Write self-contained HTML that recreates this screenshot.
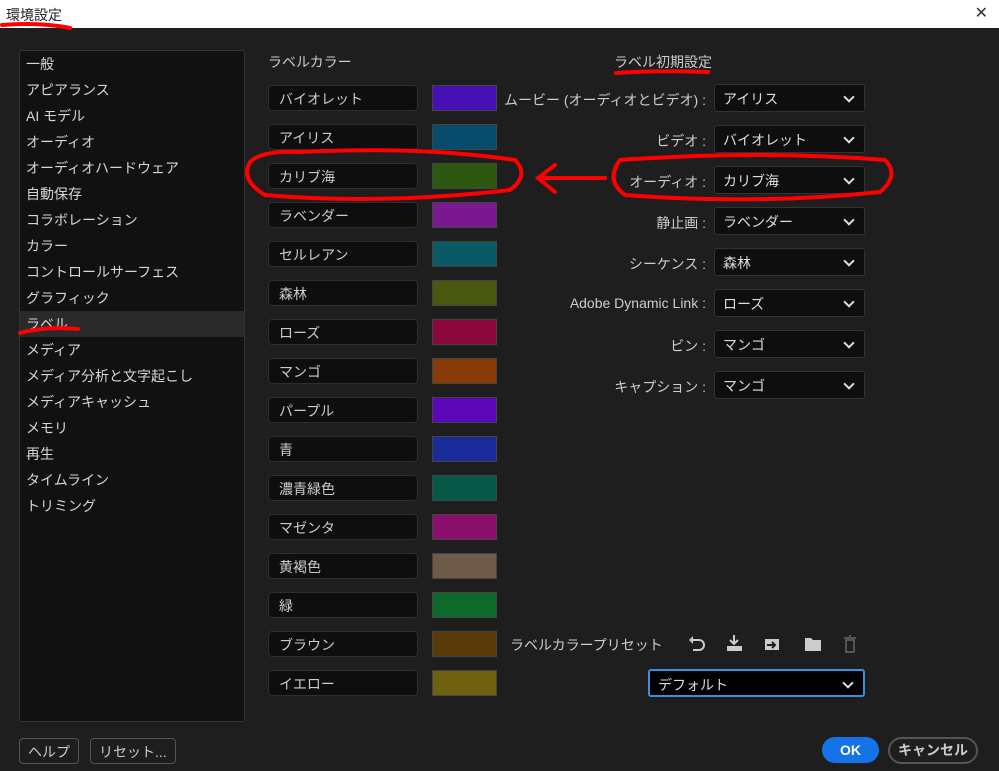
<!DOCTYPE html>
<html><head><meta charset="utf-8"><style>
*{margin:0;padding:0;box-sizing:border-box}
body{width:999px;height:771px;background:#1e1e1e;font-family:"Liberation Sans","Noto Sans CJK JP",sans-serif;color:#d0d0d0;position:relative;overflow:hidden;font-size:14px}
.title{position:absolute;left:0;top:0;width:999px;height:28px;background:#fff;color:#222;font-size:14px;padding:5px 0 0 6px}
.close{position:absolute;right:11px;top:3px;font-size:16px;color:#333;font-weight:normal}
.side{position:absolute;left:19px;top:50px;width:226px;height:672px;background:#111;border:1px solid #333;border-radius:3px}
.side div{height:26px;line-height:26px;padding-left:6px;font-size:14px;color:#d6d6d6}
.side .sel{background:#2a2a2a}
.h{position:absolute;font-size:14px;color:#ccc}
.lb{position:absolute;left:268px;width:150px;height:26px;background:#0e0e0e;border:1px solid #2e2e2e;border-radius:4px;padding:3px 0 0 10px;font-size:14px;color:#ccc}
.sw{position:absolute;left:432px;width:65px;height:26px;border:1px solid #444}
.dl{position:absolute;width:300px;text-align:right;left:406px;font-size:14px;color:#ccc}
.dd{position:absolute;left:714px;width:151px;height:28px;background:#0e0e0e;border:1px solid #333;border-radius:3px;padding:4px 0 0 8px;font-size:14px;color:#ddd}
.dd:after{content:"";position:absolute;right:11px;top:8px;width:6px;height:6px;border-right:2px solid #ddd;border-bottom:2px solid #ddd;transform:rotate(45deg)}
.btn{position:absolute;top:738px;height:26px;border:1px solid #555;border-radius:4px;padding:3px 8px;font-size:14px;color:#ccc}
</style></head><body>
<div class="title">環境設定<span class="close">✕</span></div>
<div class="side">
<div>一般</div><div>アピアランス</div><div>AI モデル</div><div>オーディオ</div><div>オーディオハードウェア</div><div>自動保存</div><div>コラボレーション</div><div>カラー</div><div>コントロールサーフェス</div><div>グラフィック</div><div class="sel">ラベル</div><div>メディア</div><div>メディア分析と文字起こし</div><div>メディアキャッシュ</div><div>メモリ</div><div>再生</div><div>タイムライン</div><div>トリミング</div>
</div>
<div class="h" style="left:268px;top:52px">ラベルカラー</div>
<div class="h" style="left:614px;top:52px">ラベル初期設定</div>

<div class="lb" style="top:85px">バイオレット</div><div class="sw" style="top:85px;background:#4610b2"></div>
<div class="lb" style="top:124px">アイリス</div><div class="sw" style="top:124px;background:#084c6c"></div>
<div class="lb" style="top:163px">カリブ海</div><div class="sw" style="top:163px;background:#2c5810"></div>
<div class="lb" style="top:202px">ラベンダー</div><div class="sw" style="top:202px;background:#7a1890"></div>
<div class="lb" style="top:241px">セルレアン</div><div class="sw" style="top:241px;background:#085a64"></div>
<div class="lb" style="top:280px">森林</div><div class="sw" style="top:280px;background:#485810"></div>
<div class="lb" style="top:319px">ローズ</div><div class="sw" style="top:319px;background:#8a083c"></div>
<div class="lb" style="top:358px">マンゴ</div><div class="sw" style="top:358px;background:#883a08"></div>
<div class="lb" style="top:397px">パープル</div><div class="sw" style="top:397px;background:#5a08b8"></div>
<div class="lb" style="top:436px">青</div><div class="sw" style="top:436px;background:#1a2c9a"></div>
<div class="lb" style="top:475px">濃青緑色</div><div class="sw" style="top:475px;background:#085848"></div>
<div class="lb" style="top:514px">マゼンタ</div><div class="sw" style="top:514px;background:#8a106c"></div>
<div class="lb" style="top:553px">黄褐色</div><div class="sw" style="top:553px;background:#6e5a48"></div>
<div class="lb" style="top:592px">緑</div><div class="sw" style="top:592px;background:#0e6a2a"></div>
<div class="lb" style="top:631px">ブラウン</div><div class="sw" style="top:631px;background:#5a3a08"></div>
<div class="lb" style="top:670px">イエロー</div><div class="sw" style="top:670px;background:#6e6210"></div>

<div class="dl" style="top:90px">ムービー (オーディオとビデオ) :</div><div class="dd" style="top:84px">アイリス</div>
<div class="dl" style="top:131px">ビデオ :</div><div class="dd" style="top:125px">バイオレット</div>
<div class="dl" style="top:172px">オーディオ :</div><div class="dd" style="top:166px">カリブ海</div>
<div class="dl" style="top:213px">静止画 :</div><div class="dd" style="top:207px">ラベンダー</div>
<div class="dl" style="top:254px">シーケンス :</div><div class="dd" style="top:248px">森林</div>
<div class="dl" style="top:295px">Adobe Dynamic Link :</div><div class="dd" style="top:289px">ローズ</div>
<div class="dl" style="top:336px">ビン :</div><div class="dd" style="top:330px">マンゴ</div>
<div class="dl" style="top:377px">キャプション :</div><div class="dd" style="top:371px">マンゴ</div>

<div class="h" style="left:510px;top:635px">ラベルカラープリセット</div>
<svg style="position:absolute;left:685px;top:632px" width="180" height="24" fill="#ccc" stroke="#ccc">
<path d="M6 8 h8 a5 5 0 0 1 0 10 h-6" fill="none" stroke-width="2"/><path d="M4 8 l4 -4 v8z" stroke="none"/>
<path d="M49 3 v8 M45 8 l4 4 4-4" fill="none" stroke-width="2"/><rect x="42" y="14" width="15" height="5" stroke="none"/>
<rect x="80" y="7" width="14" height="11" stroke="none"/><path d="M82 13 h8 M87 10 l3 3 -3 3" stroke="#1e1e1e" stroke-width="2" fill="none"/>
<path d="M120 6 h6 l2 2 h8 v11 h-16z" stroke="none"/>
<path d="M159 6 h12 M161 8 h8 v12 h-8z M164 4 h2" fill="none" stroke="#666" stroke-width="1.5"/>
</svg>
<div class="dd" style="left:648px;top:669px;width:217px;background:#000;border:2px solid #3a8ee6">デフォルト</div>

<div class="btn" style="left:19px">ヘルプ</div>
<div class="btn" style="left:90px">リセット...</div>
<div style="position:absolute;left:822px;top:737px;width:57px;height:26px;background:#1473e6;border-radius:13px;color:#fff;font-weight:bold;text-align:center;line-height:26px">OK</div>
<div style="position:absolute;left:888px;top:737px;width:90px;height:27px;border:2px solid #555;border-radius:14px;color:#ccc;font-weight:bold;text-align:center;line-height:23px">キャンセル</div>

<svg style="position:absolute;left:0;top:0" width="999" height="771" fill="none" stroke="#f00" stroke-width="4" stroke-linecap="round">
<path d="M2 25 Q40 22 70 28"/>
<path d="M616 73 Q660 70 708 72"/>
<path d="M20 333 Q45 326 78 329"/>
<path d="M300 152 Q420 146 515 160 Q530 175 510 190 Q380 205 265 195 Q240 180 250 162 Q262 150 300 152"/>
<path d="M620 160 Q760 150 885 160 Q900 175 880 192 Q760 205 625 195 Q605 180 620 160"/>
<path d="M605 178 L540 178 M555 165 L538 178 L555 192"/>
</svg>
</body></html>
